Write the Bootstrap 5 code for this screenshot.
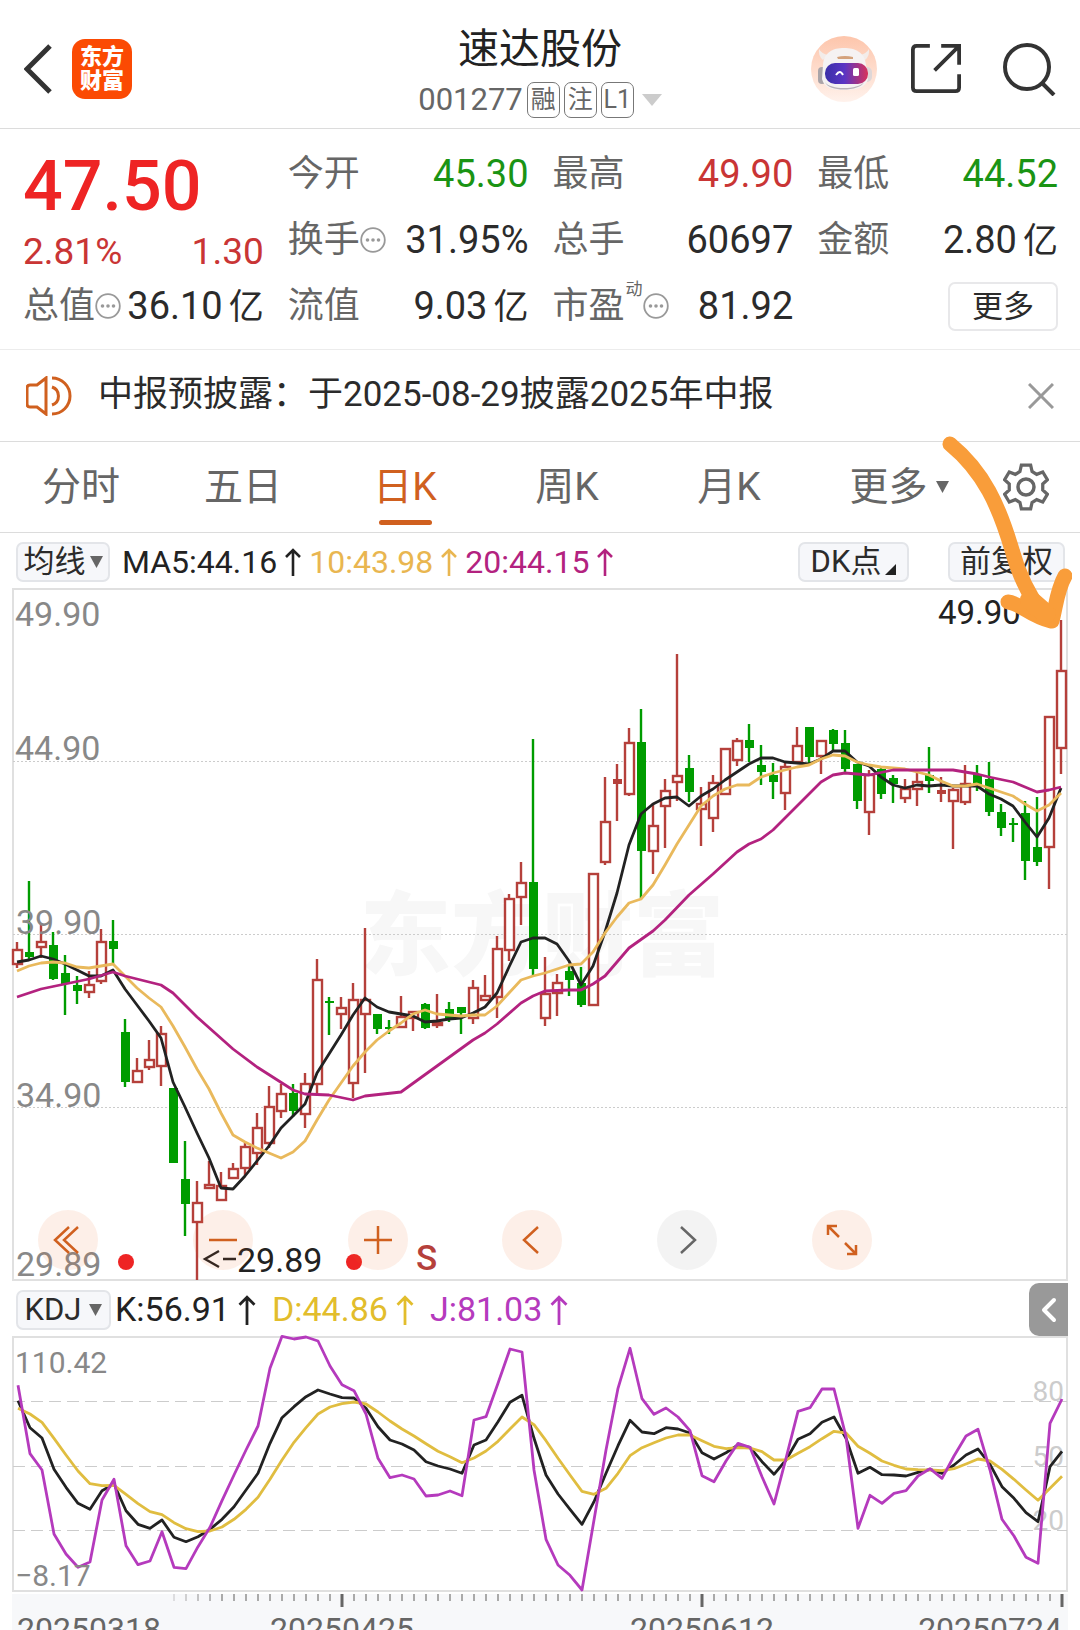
<!DOCTYPE html>
<html lang="zh-CN">
<head>
<meta charset="utf-8">
<meta name="viewport" content="width=device-width, initial-scale=1">
<title>速达股份 001277</title>
<link href="https://cdn.jsdelivr.net/npm/bootstrap@5.3.0/dist/css/bootstrap.min.css" rel="stylesheet">
<style>
:root{--ink:#2b2b2b;--soft:#666;--up:#c93535;--down:#1a9414;--accent:#d0601f;--rule:#dcdcdc}
body{font-family:Roboto,"Noto Sans CJK SC",sans-serif;color:var(--ink);background:#fff;overflow-x:hidden}
button{font-family:inherit;color:inherit}
svg{display:block;flex:none}
.plain{border:0;background:none;padding:0}
.topbar{height:129px;border-bottom:1px solid var(--rule);padding:10px 24px 0;display:grid;grid-template-columns:1fr auto 1fr}
.applogo{width:60px;height:60px;margin-left:20px;border-radius:13px;background:#fb4a03;color:#fff;font-size:22px;line-height:24px;font-weight:900}
.stockname{font-size:41px;line-height:50px;margin:0 0 8px;font-weight:400;color:#222}
.stockcode{font-size:31px;line-height:36px;color:var(--soft)}
.tagbox{border:1px solid #777;border-radius:7px;min-width:33px;height:36px;font-size:25px;line-height:33px;text-align:center}
.quote{padding:12px 22px 10px 23px;gap:24px;border-bottom:1px solid #ececec}
.quote>div{flex:1 1 0;min-width:0}
.qrow{height:66px;font-size:38px;white-space:nowrap}
.qrow .lbl{font-size:36px;color:var(--soft)}
.qrow .unit{font-size:35px;margin-left:6px}
.notice .txt{font-size:35px}
.price{height:90px;font-size:70px;font-weight:500;color:#ee2424;line-height:90px}
.pct{height:42px;font-size:37px;line-height:42px}
.up{color:var(--up)}.down{color:var(--down)}
.morebtn{width:110px;height:49px;border:2px solid #e8e8ea;border-radius:7px;font-size:31px;background:#fff;line-height:1}
.supdong{font-size:17px;color:var(--soft);align-self:flex-start;line-height:20px;margin-left:1px}
.notice{height:92px;padding:0 26px;gap:26px;border-bottom:1px solid var(--rule)}
.tabs{height:91px;border-bottom:1px solid var(--rule);display:grid;grid-template-columns:repeat(5,15%) 1fr 10%;font-size:39px}
.tabs a{color:var(--soft);text-decoration:none;display:flex;align-items:center;justify-content:center;position:relative}
.tabs a.on{color:var(--accent)}
.tabs a.on::after{content:"";position:absolute;bottom:7px;width:53px;height:5px;border-radius:3px;background:var(--accent)}
.legendrow{height:55px;font-size:32px;padding:2px 15px 0 16px;white-space:nowrap}
.legendrow.kdjrow{font-size:34px;padding-right:12px}
.pill{height:40px;border:2px solid #e3e5e9;border-radius:7px;background:#f6f7fa;font-size:31px;line-height:1;padding:0 8px;display:flex;align-items:center;justify-content:center}
.ma5{color:#222}.ma10{color:#e9b650}.ma20{color:#b3227f}.dline{color:#e2bd2c}.jline{color:#b53abd}
.plot{margin:0 12px}
.plot svg.chart{width:100%;height:auto;overflow:visible}
.chart text{font-family:Roboto,"Noto Sans CJK SC",sans-serif}
.tools{position:absolute;left:0;right:0;bottom:11px;display:grid;grid-template-columns:repeat(6,60px);column-gap:9.2%;padding-left:26px;pointer-events:none}
.tools button{width:60px;height:60px;border-radius:50%;background:#ee60201a;color:var(--accent);pointer-events:auto}
.tools button.off{background:#8888881a;color:#666}
.handle{width:39px;height:53px;border-radius:10px 0 0 10px;background:#999;color:#fff}
.timeaxis{background:#f7f8fa;margin-top:2px;height:36px;overflow:hidden}
.scribble{position:absolute;top:430px;right:8px;pointer-events:none}
</style>
<script src="https://cdn.jsdelivr.net/npm/bootstrap@5.3.0/dist/js/bootstrap.bundle.min.js"></script>
</head>
<body>
<svg width="0" height="0" class="position-absolute" aria-hidden="true">
  <symbol id="arr" viewBox="0 0 16 28"><path d="M8 28V2M1 9l7-7 7 7" fill="none" stroke="currentColor" stroke-width="2.6"/></symbol>
  <symbol id="dots" viewBox="0 0 26 26"><circle cx="13" cy="13" r="11.8" fill="none" stroke="#999" stroke-width="1.8"/><g fill="#999"><circle cx="7.5" cy="13" r="1.8"/><circle cx="13" cy="13" r="1.8"/><circle cx="18.5" cy="13" r="1.8"/></g></symbol>
</svg>
<div class="position-relative">
<header class="topbar align-items-center">
  <div class="d-flex align-items-center">
    <button class="plain" aria-label="返回"><svg width="28" height="50" viewBox="0 0 28 50"><path d="M26 2L3 25l23 23" fill="none" stroke="#333" stroke-width="5"/></svg></button>
    <div class="applogo d-flex flex-column align-items-center justify-content-center"><span>东方</span><span>财富</span></div>
  </div>
  <div class="text-center pt-1">
    <h1 class="stockname">速达股份</h1>
    <div class="stockcode d-flex align-items-center gap-1"><span>001277</span><span class="tagbox">融</span><span class="tagbox">注</span><span class="tagbox">L1</span>
      <svg class="ms-1" width="20" height="12" viewBox="0 0 20 12"><path d="M0 0h20L10 12z" fill="#ccc"/></svg></div>
  </div>
  <div class="d-flex align-items-center justify-content-end">
    <svg width="66" height="66" viewBox="0 0 66 66" class="me-4">
      <defs><linearGradient id="bg" x2="0" y2="1"><stop stop-color="#fdc5ab"/><stop offset="1" stop-color="#fff2ec"/></linearGradient>
      <linearGradient id="vis"><stop stop-color="#3b2fa8"/><stop offset=".45" stop-color="#5a35c4"/><stop offset="1" stop-color="#d8325a"/></linearGradient></defs>
      <circle cx="33" cy="33" r="33" fill="url(#bg)"/>
      <path d="M12 24q-5-4-4-11 3 5 9 6zM54 24q5-4 4-11-3 5-9 6z" fill="#f3ece9"/>
      <rect x="7" y="31" width="8" height="17" rx="4" fill="#aaa4a8"/><rect x="51" y="31" width="10" height="15" rx="5" fill="#ded7d8"/>
      <path d="M12 29C13 16 22 12 33 12s21 4 22 17l2 14c-2 9-13 11-24 11S13 52 11 43z" fill="#f5f2f2"/>
      <path d="M14 46c5 8 33 8 39 0-3 9-35 11-39 0z" fill="#b9b2b8"/>
      <path d="M26 21q8-2 16 0v2H27z" fill="#d4a27c"/>
      <rect x="14" y="27" width="43" height="21" rx="10" fill="url(#vis)"/>
      <path d="M25 39q4-6 7 0" fill="none" stroke="#fff" stroke-width="2"/><rect x="42" y="32" width="6" height="8" rx="1.5" fill="#fff"/>
    </svg>
    <button class="plain ms-2 me-4" aria-label="分享"><svg width="54" height="50" viewBox="-2 0 57 53" fill="none" stroke="#333" stroke-width="4"><path d="M20 2H6Q2 2 2 6v40q0 4 4 4h41q4 0 4-4V32M32 2h19v20M50 3L25 28"/></svg></button>
    <button class="plain ms-3" aria-label="搜索"><svg width="53" height="54" viewBox="0 0 53 54" fill="none" stroke="#333" stroke-width="4"><circle cx="24" cy="25" r="22"/><path d="M39 41l12 12"/></svg></button>
  </div>
</header>

<section class="quote d-flex">
  <div>
    <div class="price">47.50</div>
    <div class="pct up d-flex justify-content-between"><span>2.81%</span><span>1.30</span></div>
    <div class="qrow d-flex align-items-center justify-content-between"><span class="lbl d-flex align-items-center">总值<svg width="26" height="26"><use href="#dots"/></svg></span><span>36.10<span class="unit">亿</span></span></div>
  </div>
  <div>
    <div class="qrow d-flex align-items-center justify-content-between"><span class="lbl">今开</span><span class="down">45.30</span></div>
    <div class="qrow d-flex align-items-center justify-content-between"><span class="lbl d-flex align-items-center">换手<svg width="26" height="26"><use href="#dots"/></svg></span><span>31.95%</span></div>
    <div class="qrow d-flex align-items-center justify-content-between"><span class="lbl">流值</span><span>9.03<span class="unit">亿</span></span></div>
  </div>
  <div>
    <div class="qrow d-flex align-items-center justify-content-between"><span class="lbl">最高</span><span class="up">49.90</span></div>
    <div class="qrow d-flex align-items-center justify-content-between"><span class="lbl">总手</span><span>60697</span></div>
    <div class="qrow d-flex align-items-center justify-content-between"><span class="lbl d-flex align-items-center">市盈<span class="supdong">动</span><svg width="26" height="26"><use href="#dots"/></svg></span><span>81.92</span></div>
  </div>
  <div>
    <div class="qrow d-flex align-items-center justify-content-between"><span class="lbl">最低</span><span class="down">44.52</span></div>
    <div class="qrow d-flex align-items-center justify-content-between"><span class="lbl">金额</span><span>2.80<span class="unit">亿</span></span></div>
    <div class="qrow d-flex align-items-center justify-content-end"><button class="morebtn">更多</button></div>
  </div>
</section>

<section class="notice d-flex align-items-center">
  <svg width="46" height="40" viewBox="0 0 46 40" fill="none" stroke="#d0601f" stroke-width="3"><path d="M20 2v36l-9-7H4q-3 0-3-3V12q0-3 3-3h7z"/><path d="M26 11a9.5 9.5 0 010 18M26 2a18 18 0 010 36"/></svg>
  <span class="txt flex-grow-1 text-nowrap">中报预披露：于2025-08-29披露2025年中报</span>
  <button class="plain" aria-label="关闭"><svg width="26" height="26" viewBox="0 0 26 26"><path d="M1 1l24 24M25 1L1 25" stroke="#999" stroke-width="3"/></svg></button>
</section>

<nav class="tabs">
  <a href="#">分时</a><a href="#">五日</a><a href="#" class="on" aria-current="page">日K</a><a href="#">周K</a><a href="#">月K</a>
  <a href="#" class="ps-3">更多<svg class="ms-2" width="13" height="12" viewBox="0 0 13 12"><path d="M0 0h13L6.5 12z" fill="#666"/></svg></a>
  <a href="#" aria-label="设置"><svg width="46" height="48" viewBox="-23 -24 46 48" fill="none" stroke="#666" stroke-width="3.5"><circle r="8"/><path d="M-5-22.5H5l1.5 6.5 5 3 6.500-2.500 5 8L18-3v6l5 4.500-5 8-6.500-2.500-5 3L5 22.500H-5l-1.500-6.500-5-3-6.500 2.500-5-8 5-4.500v-6l-5-4.500 5-8 6.500 2.500 5-3z" transform="scale(.93 .97)"/></svg></a>
</nav>

<div class="legendrow d-flex align-items-center">
  <button class="pill" style="width:94px">均线<svg class="ms-1" width="13" height="12" viewBox="0 0 13 12"><path d="M0 0h13L6.500 12z" fill="#666"/></svg></button>
  <span class="ma5 d-flex align-items-center ms-2 ps-1">MA5:44.16<svg class="ms-2" width="16" height="28"><use href="#arr"/></svg></span>
  <span class="ma10 d-flex align-items-center ms-2">10:43.98<svg class="ms-2" width="16" height="28"><use href="#arr"/></svg></span>
  <span class="ma20 d-flex align-items-center ms-2">20:44.15<svg class="ms-2" width="16" height="28"><use href="#arr"/></svg></span>
  <button class="pill ms-auto" style="width:111px">DK点<svg class="ms-1 mt-3" width="11" height="11" viewBox="0 0 11 11"><path d="M11 0v11H0z" fill="#222"/></svg></button>
  <button class="pill" style="width:117px;margin-left:39px">前复权</button>
</div>

<div class="plot position-relative">
  <svg class="chart" id="kchart" viewBox="12 588 1056 693" role="img" aria-label="日K线图"></svg>
  <div class="tools">
    <button class="plain" aria-label="最早"><svg width="60" height="60" fill="none" stroke="currentColor" stroke-width="2.500"><path d="M31 17L17 30l14 13M40 17L26 30l14 13"/></svg></button>
    <button class="plain" aria-label="缩小"><svg width="60" height="60" stroke="currentColor" stroke-width="2.500"><path d="M16 30h28"/></svg></button>
    <button class="plain" aria-label="放大"><svg width="60" height="60" stroke="currentColor" stroke-width="2.500"><path d="M16 30h28M30 16v28"/></svg></button>
    <button class="plain" aria-label="左移"><svg width="60" height="60" fill="none" stroke="currentColor" stroke-width="2.500"><path d="M36 17L22 30l14 13"/></svg></button>
    <button class="plain off" aria-label="右移"><svg width="60" height="60" fill="none" stroke="currentColor" stroke-width="2.500"><path d="M24 17l14 13-14 13"/></svg></button>
    <button class="plain" aria-label="全屏"><svg width="60" height="60" fill="none" stroke="currentColor" stroke-width="2.500"><path d="M16 25v-9h9M16 16l11 11M44 35v9h-9M44 44L33 33"/></svg></button>
  </div>
</div>

<div class="legendrow kdjrow d-flex align-items-center">
  <button class="pill" style="width:95px">KDJ<svg class="ms-2" width="13" height="12" viewBox="0 0 13 12"><path d="M0 0h13L6.500 12z" fill="#666"/></svg></button>
  <span class="ma5 d-flex align-items-center ms-1">K:56.91<svg class="ms-2" width="18" height="30"><use href="#arr"/></svg></span>
  <span class="dline d-flex align-items-center ms-3">D:44.86<svg class="ms-2" width="18" height="30"><use href="#arr"/></svg></span>
  <span class="jline d-flex align-items-center ms-3">J:81.03<svg class="ms-2" width="18" height="30"><use href="#arr"/></svg></span>
  <button class="plain handle ms-auto" aria-label="展开指标"><svg width="39" height="53" fill="none" stroke="#fff" stroke-width="4" stroke-linecap="round" stroke-linejoin="round"><path d="M25 17L15 27l10 10"/></svg></button>
</div>

<div class="plot">
  <svg class="chart" id="kdj" viewBox="12 1336 1056 256" role="img" aria-label="KDJ指标"></svg>
  <div class="timeaxis"><svg class="chart" id="axis" viewBox="12 1594 1056 50" role="img" aria-label="日期"></svg></div>
</div>

<svg class="scribble" width="140" height="210" viewBox="932 430 140 210" fill="none" stroke="#f99d3a" stroke-width="15" stroke-linecap="round" stroke-linejoin="round">
  <path d="M950 444C984 472 999 506 1012 550c7 26 20 50 32 66"/><path d="M1008 602c12 1 22 14 43 19M1065 576c-8 14-9 30-13 45"/><path d="M1030 600l16 14" stroke-width="20"/>
</svg>
</div>

<script>
// high, body top, body bottom, low, colour (r = rising, g = falling, f = flat rising)
const candles = `942 949 964 968 r|881 952 957 959 g|924 941 947 958 r|932 945 979 980 g|955 973 984 1015 g|976 985 991 1004 g|971 984 992 998 r|929 941 981 984 r|920 941 949 965 g|1019 1032 1082 1087 g|1058 1070 1082 1082 r|1040 1059 1067 1070 r|1026 1033 1066 1086 r|1088 1088 1163 1163 g|1141 1179 1204 1236 g|1181 1202 1222 1280 r|1161 1184 1188 1188 r|1172 1185 1200 1200 r|1163 1168 1178 1178 r|1143 1146 1168 1175 r|1113 1127 1153 1165 r|1086 1106 1143 1148 r|1084 1093 1111 1118 r|1084 1093 1111 1117 g|1073 1083 1114 1128 r|959 979 1084 1093 r|997 1001 1003 1035 g|997 1007 1014 1029 r|983 999 1083 1098 r|928 999 1014 1073 r|1014 1014 1029 1034 g|1020 1027 1029 1034 g|996 1016 1027 1027 r|1011 1011 1018 1031 r|1003 1004 1028 1029 g|994 1022 1025 1028 r|1002 1009 1020 1022 g|1007 1007 1013 1034 g|980 987 1018 1024 r|975 995 1000 1000 r|936 948 997 1018 r|894 898 950 961 r|862 882 897 925 r|739 882 969 976 g|957 993 1018 1026 r|974 982 993 1016 r|965 971 980 996 g|967 983 1005 1007 g|873 873 1005 1005 r|777 821 862 865 r|764 779 784 821 f|728 742 794 796 r|709 742 851 898 g|803 825 851 874 r|779 790 806 848 r|654 775 782 801 r|755 768 792 802 g|787 803 809 846 r|775 782 818 832 r|748 748 794 794 r|738 740 760 766 r|724 740 748 762 g|745 765 772 785 g|763 775 782 799 g|763 766 793 810 r|727 745 762 762 r|727 727 757 764 g|740 740 756 774 r|729 730 744 750 g|730 743 769 772 g|764 764 801 809 g|770 774 812 835 r|768 769 794 799 g|775 778 784 803 g|779 788 798 803 r|770 781 789 806 r|747 775 781 793 g|777 790 794 802 f|788 789 801 849 r|765 783 802 805 r|765 774 787 791 g|762 779 812 816 g|804 812 828 836 g|818 823 825 842 g|801 813 861 880 g|797 847 862 866 g|716 716 847 889 r|620 670 748 774 r`.split('|').map(s=>s.split(' '));
const ma5=[962,960,956,959,964,970,976,976,970,989,1005,1021,1038,1082,1107,1133,1158,1188,1189,1176,1161,1146,1128,1116,1104,1073,1054,1035,1015,998,1007,1012,1014,1016,1022,1021,1019,1018,1013,1007,993,967,942,938,938,944,961,985,966,932,893,845,814,804,798,797,806,796,789,780,772,764,758,758,762,763,764,759,751,751,762,766,777,785,788,785,786,785,786,786,786,794,799,806,822,837,818,788];
const ma10=[971,966,963,962,963,967,968,966,964,976,988,998,1007,1026,1047,1069,1089,1113,1135,1142,1148,1153,1158,1152,1141,1120,1100,1083,1066,1052,1040,1031,1023,1014,1010,1014,1015,1016,1015,1015,1006,993,980,976,973,969,965,964,952,933,917,903,899,885,865,844,825,806,796,789,785,785,777,773,770,767,765,759,755,756,762,765,767,768,769,772,775,781,786,786,784,788,792,796,804,811,805,793];
const ma20='17,997 41,989 65,984 89,979 113,972 125,976 161,985 173,993 197,1017 233,1049 257,1067 293,1090 305,1094 329,1095 353,1100 365,1096 401,1092 437,1066 473,1040 485,1033 497,1024 521,1003 533,996 545,991 569,990 581,990 593,984 605,976 617,962 629,948 653,931 665,920 689,895 713,874 737,852 749,844 761,839 773,830 797,806 821,782 833,775 845,773 869,775 893,770 929,770 953,770 977,774 989,777 1013,782 1025,787 1037,792 1049,790 1061,787';
// KDJ series, in thirds of a pixel below the top of the indicator area
const K=[362,443,474,568,622,670,688,632,612,692,733,745,720,772,785,770,748,718,680,630,580,490,413,380,350,330,342,353,354,385,440,480,492,510,545,558,567,580,495,480,425,367,346,475,585,642,688,733,665,580,497,421,456,461,443,447,459,518,537,518,495,502,545,583,540,478,461,427,411,475,580,562,584,585,588,577,568,580,555,525,507,553,620,655,698,725,560,514];
const D=[385,402,427,475,525,573,611,617,616,643,671,695,704,728,746,755,753,741,718,688,652,598,540,487,443,402,381,371,366,372,396,423,447,468,491,514,530,548,534,513,484,447,411,434,482,535,585,634,643,625,580,527,503,488,474,465,465,482,499,506,503,504,515,540,540,520,500,476,454,459,499,520,543,556,567,569,570,572,566,552,537,543,568,598,630,661,625,589];
const J=[316,521,570,762,822,862,846,660,598,797,854,843,755,862,866,800,742,662,585,510,438,265,169,177,171,183,258,314,332,402,535,593,585,597,648,645,633,647,420,410,310,207,216,570,778,855,886,930,720,510,325,205,356,403,384,411,452,587,605,543,490,502,590,672,535,394,383,327,327,470,745,646,670,640,632,588,566,595,528,468,448,570,718,768,832,850,430,357];
const line=(p,c)=>`<polyline points="${p}" fill="none" stroke="${c}" stroke-width="2.8" stroke-linejoin="round"/>`;
const pts=a=>a.map((v,i)=>`${17+12*i},${v}`).join(' ');
const label=(x,y,t,c='#888',s=34,e='')=>`<text x="${x}" y="${y}" fill="${c}" font-size="${s}" ${e}>${t}</text>`;

let h='<text x="360" y="968" font-size="91" font-weight="900" fill="#f7f7f7">东方财富</text>';
h+='<path d="M13 1280V589H1067V1280z" fill="none" stroke="#e0e0e0" stroke-width="2"/>';
for(const y of [761,934,1107]) h+=`<path d="M13 ${y}.5H1067" stroke="#ccc" stroke-dasharray="2 2"/>`;
candles.forEach(([hi,t,b,lo,c],i)=>{
  const x=17+12*i, up=c!='g', col=up?'#b5403b':'#009c00';
  h+=`<g stroke="${col}" stroke-width="2.4"><path d="M${x} ${hi}V${t}M${x} ${b}V${lo}"/>`;
  h+=c=='r'?`<rect x="${x-4}" y="${+t+1}" width="9" height="${Math.max(1,b-t-1)}" fill="#fff"/></g>`:`<rect x="${x-4}" y="${t}" width="9" height="${b-t}" fill="${col}" stroke="none"/></g>`;
});
h+=line(pts(ma5),'#222')+line(pts(ma10),'#e9b95c')+line(ma20,'#b3227f');
h+=label(15,626,'49.90')+label(15,760,'44.90')+label(16,934,'39.90')+label(16,1107,'34.90')+label(16,1276,'29.89');
h+=label(938,624,'49.90','#222',33)+label(237,1272,'29.89','#222',34);
h+='<path d="M219 1251l-14 8 14 8M223 1259h13M1024 612h11M1038 603l15 8-15 8" fill="none" stroke="#222" stroke-width="2.4"/>';
h+='<circle cx="126" cy="1262" r="8" fill="#ee2424"/><circle cx="354" cy="1262" r="8" fill="#ee2424"/>'+label(416,1270,'S','#b5403b',35,'font-weight="500"');
document.getElementById('kchart').innerHTML=h;

const kp=a=>a.map((v,i)=>`${18+12*i},${(1280+v/3).toFixed(1)}`).join(' ');
h='<path d="M13 1591V1337H1067V1591z" fill="none" stroke="#e0e0e0" stroke-width="2"/>';
for(const y of [1401,1466,1530]) h+=`<path d="M13 ${y}.5H1067" stroke="#ccc" stroke-dasharray="12 6"/>`;
h+=label(1064,1401,'80','#ccc',28,'text-anchor="end"')+label(1064,1466,'50','#ccc',28,'text-anchor="end"')+label(1064,1530,'20','#ccc',28,'text-anchor="end"');
h+=line(kp(K),'#222')+line(kp(D),'#e0bd40')+line(kp(J),'#b53abd');
h+=label(15,1373,'110.42','#888',30)+label(15,1586,'−8.17','#888',30);
document.getElementById('kdj').innerHTML=h;

h='';
for(let i=13;i<88;i++){const m=i%30==27;h+=`<path d="M${18+12*i} 1594v${m?13:7}" stroke="${m?'#666':'#aaa'}" stroke-width="${m?3:2}" opacity="${Math.min(1,(i-11)/6)}"/>`;}
h+=label(17,1640,'20250318','#666',32)+label(342,1640,'20250425','#666',32,'text-anchor="middle"')+label(702,1640,'20250612','#666',32,'text-anchor="middle"')+label(1062,1640,'20250724','#666',32,'text-anchor="end"');
document.getElementById('axis').innerHTML=h;
</script>
</body>
</html>
